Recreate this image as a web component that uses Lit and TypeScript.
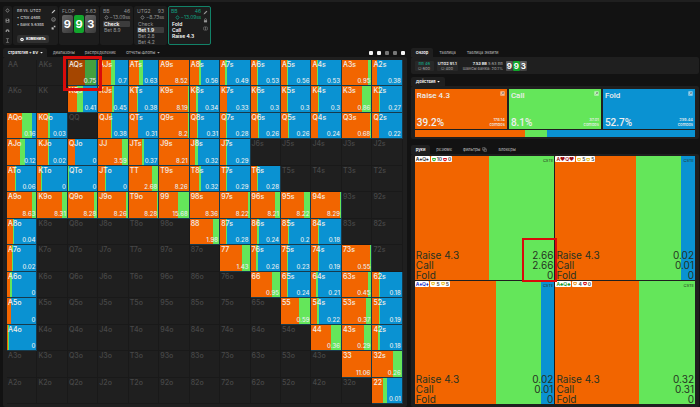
import { LitElement, html, svg, css, nothing } from "lit";
import { customElement, property } from "lit/decorators.js";
import { classMap } from "lit/directives/class-map.js";
import { styleMap } from "lit/directives/style-map.js";

const RANKS = "AKQJT98765432".split("");

/** Hand -> [EV, raise share, call share]; the remainder is fold. */
const HANDS: Record<string, [string, number, number]> = {
  AQs: ["0.75", 57, 40], AJs: ["0.7", 44, 11], ATs: ["0.63", 35, 14], A9s: ["8.52", 100, 0],
  A8s: ["0.56", 31, 7], A7s: ["0.49", 18, 4], A6s: ["0.53", 20, 4], A5s: ["0.56", 22, 3],
  A4s: ["0.53", 20, 4], A3s: ["0.95", 89, 11], A2s: ["0.38", 15, 3],
  KQs: ["0.41", 30, 20], KJs: ["0.45", 45, 7], KTs: ["0.38", 27, 4], K9s: ["8.19", 96, 4],
  K8s: ["0.34", 22, 4], K7s: ["0.33", 22, 3], K6s: ["0.3", 20, 4], K5s: ["0.3", 22, 3],
  K4s: ["0.3", 22, 4], K3s: ["0.86", 70, 30], K2s: ["0.27", 22, 3],
  AQo: ["0.16", 53, 34], KQo: ["0.03", 38, 6], QJs: ["0.38", 43, 3], QTs: ["0.31", 31, 0],
  Q9s: ["8.2", 98, 2], Q8s: ["0.31", 23, 3], Q7s: ["0.28", 21, 4], Q6s: ["0.26", 23, 3],
  Q5s: ["0.26", 24, 2], Q4s: ["0.24", 23, 2], Q3s: ["0.68", 97, 3], Q2s: ["0.22", 22, 2],
  AJo: ["0.12", 46, 15], KJo: ["0.02", 36, 5], QJo: ["0", 25, 0], JJ: ["3.59", 80, 20],
  JTs: ["0.37", 46, 4], J9s: ["8.21", 100, 0], J8s: ["0.32", 18, 9], J7s: ["0.29", 19, 5],
  ATo: ["0.06", 26, 5], KTo: ["0", 14, 4], QTo: ["0", 1, 2], JTo: ["0", 22, 3],
  TT: ["2.68", 79, 21], T9s: ["8.26", 100, 0], T8s: ["0.32", 31, 6], T7s: ["0.29", 21, 4],
  T6s: ["0.28", 20, 5],
  A9o: ["8.63", 85, 15], K9o: ["8.31", 85, 15], Q9o: ["8.28", 91, 9], J9o: ["8.26", 93, 7],
  T9o: ["8.28", 98, 2], "99": ["15.68", 64, 36], "98s": ["8.36", 100, 0], "97s": ["8.22", 94, 6],
  "96s": ["8.21", 84, 16], "95s": ["8.22", 81, 19], "94s": ["8.29", 98, 2],
  A8o: ["0.04", 22, 1], "88": ["1.98", 81, 19], "87s": ["0.28", 21, 3], "86s": ["0.24", 22, 4],
  "85s": ["0.2", 24, 3], "84s": ["0.18", 24, 4],
  A7o: ["0.02", 17, 5], "77": ["1.43", 75, 25], "76s": ["0.26", 17, 7], "75s": ["0.23", 21, 4],
  "74s": ["0.19", 22, 4], "73s": ["0.55", 96, 4],
  A6o: ["0", 9, 7], "66": ["0.95", 74, 26], "65s": ["0.24", 20, 5], "64s": ["0.21", 18, 7],
  "63s": ["0.45", 89, 11], "62s": ["0.18", 22, 4],
  A5o: ["0", 15, 0], "55": ["0.59", 63, 37], "54s": ["0.22", 21, 5], "53s": ["0.37", 83, 17],
  "52s": ["0.19", 22, 4],
  A4o: ["0", 5, 2], "44": ["0.36", 66, 34], "43s": ["0.29", 75, 25], "42s": ["0.18", 21, 5],
  "33": ["11.06", 100, 0], "32s": ["0.26", 70, 30],
  "22": ["0.01", 37, 13],
};

const bands = (raise: number, call: number, dim = false) => {
  const [r, c, f] = dim ? ["#a54600", "#44a03e", "#07659a"] : ["#f26500", "#64e65a", "#0a92d2"];
  return {
    background: `linear-gradient(90deg, ${r} ${raise}%, ${c} ${raise}% ${raise + call}%, ${f} ${raise + call}%)`,
  };
};

const icon = (body: unknown, cls = "") =>
  html`<svg class="ico ${cls}" viewBox="0 0 16 16" aria-hidden="true">${body}</svg>`;

const I = {
  diamond: svg`<path d="M8 2l5 6-5 6-5-6z" fill="none" stroke="currentColor" stroke-width="2.4"/>`,
  save: svg`<path d="M2 2h10l2 2v10H2z" fill="currentColor"/><path d="M5 3h5v3H5zM5 9h6v4H5z" fill="#1e1e1e"/>`,
  cloud: svg`<path d="M2 13V9a6 5 0 0 1 12 0v4h-4V9H6v4z" fill="currentColor"/>`,
  height: svg`<path d="M3 2h10M3 14h10M8 2v12" fill="none" stroke="currentColor" stroke-width="1.8"/>`,
  pencil: svg`<path d="M2 14l1-4 8-8 3 3-8 8z" fill="currentColor"/>`,
  clock: svg`<circle cx="8" cy="8" r="6" fill="none" stroke="currentColor" stroke-width="1.6"/><path d="M5 7h2M9 7h2M5 10h6" stroke="currentColor" stroke-width="1.4"/>`,
  expand: svg`<path d="M8 2h6v6l-2-2-3 3-2-2 3-3zM2 7h4v3h3v4H2z" fill="currentColor"/>`,
  lock: svg`<path d="M3 7h10v7H3z" fill="currentColor"/><path d="M5 7V5a3 3 0 0 1 6 0v2" fill="none" stroke="currentColor" stroke-width="2"/>`,
  panes: svg`<rect x="2" y="3" width="12" height="10" rx="2" fill="none" stroke="currentColor" stroke-width="1.6"/><path d="M8 3v10" stroke="currentColor" stroke-width="1.6"/>`,
  gear: svg`<circle cx="8" cy="8" r="7" fill="#fff"/><circle cx="8" cy="8" r="2.6" fill="#333"/>`,
  caret: svg`<path d="M1 5h14l-7 8z" fill="currentColor"/>`,
  popout: svg`<rect x="1" y="1" width="14" height="14" rx="1" fill="#ffffff90"/><path d="M5 11l6-6M7 5h4v4" stroke="#666" stroke-width="1.8" fill="none"/>`,
  copy: svg`<path d="M2 2h8v8H2zM6 6h8v8H6z" fill="none" stroke="currentColor" stroke-width="1.4"/>`,
  shield: svg`<path d="M1 2h14v6c0 4-3 6-7 8-4-2-7-4-7-8z" fill="currentColor"/><path d="M5 6h6v4H5z" fill="#fff"/>`,
};

@customElement("range-cell")
class RangeCell extends LitElement {
  @property() hand = "";

  static styles = css`
    :host { display: block; min-width: 0; }
    .cell {
      position: relative; box-sizing: border-box; height: 100%; padding: 1px;
      display: flex; flex-direction: column; justify-content: space-between;
      border-right: 1px solid #191919; border-bottom: 1px solid #191919;
      background-color: #1f1f1f;
      font-size: 7px; line-height: 8px; font-weight: 500; color: #484848;
    }
    .on { color: #f4efe8; border-color: #173a4c; }
    .ev { font-size: 6px; line-height: 6px; text-align: right; color: #e8eef0; }
    .mark {
      position: absolute; z-index: 2; inset: -4px -5px -6px -5px;
      border: 3px solid #d90b0b; pointer-events: none;
    }
  `;

  render() {
    const d = HANDS[this.hand];
    const picked = this.hand === "AQs";
    return html`<div
      class=${classMap({ cell: true, on: !!d })}
      style=${styleMap(d ? bands(d[1], d[2], picked) : {})}
    >
      <span>${this.hand}</span>
      ${d ? html`<span class="ev">${d[0]}</span>` : nothing}
      ${picked ? html`<span class="mark"></span>` : nothing}
    </div>`;
  }
}

interface Combo {
  suit: string; glyph: string; notes: [string, string][];
  raise: number; call: number; ev: [string, string, string]; marked?: boolean;
}

const COMBOS: Combo[] = [
  { suit: "spade", glyph: "♠", notes: [["green", "10"], ["red", "0"]], raise: 53, call: 47, ev: ["2.66", "2.66", "0"], marked: true },
  { suit: "heart", glyph: "♥", notes: [["yellow", "5"], ["yellow", "5"]], raise: 58, call: 32, ev: ["0.02", "0.01", "0"] },
  { suit: "diam", glyph: "♦", notes: [["yellow", "5"], ["yellow", "5"]], raise: 58, call: 33, ev: ["0.02", "0.01", "0"] },
  { suit: "club", glyph: "♣", notes: [["orange", "4"], ["red", "0"]], raise: 60, call: 40, ev: ["0.32", "0.31", "0"] },
];

@customElement("app-root")
class AppRoot extends LitElement {
  static styles = css`
    :host {
      display: flex; flex-direction: column; min-height: 100vh; box-sizing: border-box;
      background: #121212; color: #959595;
      font-family: Inter, "Liberation Sans", sans-serif; font-size: 5px; line-height: 6px;
      border-top: 2px solid #1f1f1f;
    }
    button { font: inherit; color: inherit; background: none; border: 0; padding: 0; margin: 0; text-align: left; }
    small { font-size: 4px; }
    .ico { width: 5px; height: 5px; flex: none; display: block; }
    .ico.sm { width: 3px; }
    .row { display: flex; align-items: center; }
    .between { justify-content: space-between; }
    .white { color: #f0f0f0; font-weight: 600; }
    .teal { color: #12a080; }

    .toolbar { display: flex; gap: 1px; padding: 4px 3px 0; height: 39px; }
    .box { background: #1d1d1d; border-radius: 2px; box-sizing: border-box; }
    .icons { display: flex; flex-direction: column; justify-content: space-around; align-items: center; width: 9px; }
    .spot { width: 45px; display: flex; font-size: 4px; font-weight: 500; color: #c4c4c4; }
    .spot .text { flex: 1; padding: 2px 0 1px 4px; display: flex; flex-direction: column; align-items: flex-start; gap: 1px; }
    .spot .icons { justify-content: flex-start; gap: 3px; padding-top: 3px; }
    .edit { background: #303030; border-radius: 2px; color: #fff; font-weight: 700; height: 8px; padding: 0 3px; gap: 2px; margin-top: 6px; }
    .edit .ico { width: 4px; }
    .flop { width: 40px; padding: 2px 3px; }
    .cards { display: flex; gap: 1px; margin-top: 1px; }
    .card {
      flex: 1; height: 18px; border-radius: 2px; color: #fff; background: linear-gradient(135deg, #666, #3a3a3a);
      font-size: 11px; line-height: 18px; font-weight: 700; text-align: center;
    }
    .card.g { background: #12a62c; }
    .seat { width: 33px; padding: 2px 3px 0; }
    .seat .stack { display: flex; justify-content: flex-end; align-items: center; gap: 1px; }
    .seat button { display: block; width: 100%; height: 6px; line-height: 6px; padding-left: 1px; border-radius: 1px; box-sizing: border-box; }
    .seat .picked { background: #3c3c3c; color: #fff; font-weight: 600; }
    .hero { width: 43px; display: flex; border: 1px solid #128268; padding: 1px 0 0 2px; }
    .hero .main { flex: 1; }
    .hero .icons { justify-content: flex-start; gap: 3px; padding-top: 2px; }
    .hero button { color: #fff; font-weight: 600; }

    .columns { flex: 1; display: grid; grid-template-columns: 405fr 289fr; gap: 4px; padding: 3px 1px 0 3px; }
    .left, .right { display: flex; flex-direction: column; min-width: 0; }
    .tabs { display: flex; align-items: center; gap: 1px; height: 9px; font-size: 4px; font-weight: 500; color: #a8a8a8; }
    .tabs button { height: 9px; padding: 0 5px; display: flex; align-items: center; gap: 2px; border-radius: 2px 2px 0 0; }
    .tabs button.sel { background: #1f1f1f; color: #fff; font-weight: 600; }
    .left .tabs > button { padding: 0 4px 0 5px; }
    .tabs .dots { margin-left: auto; display: flex; gap: 4px; padding-right: 2px; }
    .tabs .dots button { width: 4px; height: 4px; padding: 0; border-radius: 1px; background: #f4f4f4; }
    .tabs .dots .dim { background: #777; }
    .panel { background: #1f1f1f; border-radius: 2px; }
    .left .panel { flex: 1; padding: 3px 4px; display: flex; }
    .range { flex: 1; display: grid; grid-template-columns: repeat(13, minmax(0, 1fr)); grid-template-rows: repeat(13, minmax(26px, 1fr)); }

    .summary { display: flex; align-items: center; gap: 3px; height: 17px; padding: 0 4px; font-size: 4px; line-height: 5px; font-weight: 500; }
    .chip { background: #282828; border-radius: 1px; padding: 0 1px; text-align: center; min-width: 17px; }
    .pot { text-align: right; margin-left: 2px; }
    .summary .cards { margin: 0; gap: 0; }
    .summary .card { flex: none; width: 7px; height: 10px; line-height: 10px; font-size: 8px; border-radius: 1px; }
    .summary + .tabs { margin-top: 3px; }
    .actions { padding: 3px 4px 2px; }
    .tiles { display: grid; grid-template-columns: repeat(3, 1fr); gap: 2px; }
    .tile {
      box-sizing: border-box; height: 40px; padding: 2px; color: #eee;
      display: flex; flex-direction: column; justify-content: space-between;
      font-family: Roboto, Inter, sans-serif; font-size: 8px; line-height: 9px; font-weight: 500;
    }
    .tile .pct { font-size: 10px; }
    .tile .combos { font-family: Inter, sans-serif; font-size: 4px; line-height: 5px; text-align: right; }
    .tile .top { display: flex; justify-content: space-between; }
    .tile .bottom { display: flex; justify-content: space-between; align-items: flex-end; }
    .raise { background: #f26500; }
    .call { background: #64e65a; }
    .fold { background: #0a92d2; }
    .share { height: 7px; margin-top: 1px; }
    .lower { margin-top: 6px; }
    .combosPanel { flex: 1; padding: 2px 4px 3px; display: grid; grid-template-columns: 1fr 1fr; grid-template-rows: 1fr 1fr; gap: 1px; }
    .combo { position: relative; display: flex; flex-direction: column; justify-content: space-between; min-height: 120px; color: #263322; }
    .heads { display: flex; gap: 1px; align-items: flex-start; }
    .tag { display: flex; align-items: center; gap: 1px; background: #fff; height: 6px; padding: 0 1px; border-radius: 1px; font-size: 5px; line-height: 6px; color: #444; font-weight: 600; }
    .tag.spade { color: #333; } .tag.heart { color: #9c0d12; } .tag.diam { color: #2030c8; } .tag.club { color: #149a2c; }
    .green { color: #35b53a; } .red { color: #d81622; } .yellow { color: #ecc431; } .orange { color: #efa23b; }
    .tag .ico { width: 4px; }
    .cste { margin-left: auto; padding: 2px 1px; font-size: 4px; line-height: 5px; }
    .evs { margin: 0; padding: 0 1px; font-size: 10px; line-height: 10px; }
    .evs div { display: flex; justify-content: space-between; }
    .evs dd { margin: 0; }
    .mark { position: absolute; z-index: 2; right: -3px; bottom: -2px; width: 35px; height: 44px; box-sizing: border-box; border: 2px solid #d90b0b; pointer-events: none; }
  `;

  private seat(name: string, n: string, stack: string, opts: string[], picked: number) {
    return html`<div class="box seat">
      <div class="row between"><span>${name}</span><span>${n}</span></div>
      <div class="stack">${icon(I.diamond)}<span>${stack}<small>вв</small></span></div>
      <div>
        ${opts.map((o, i) => html`<button class=${classMap({ picked: i === picked })}>${o}</button>`)}
      </div>
    </div>`;
  }

  private tile(kind: string, name: string, pct: string, combos: string) {
    return html`<div class="tile ${kind}">
      <div class="top"><span>${name}</span>${icon(I.popout)}</div>
      <div class="bottom">
        <span class="pct">${pct}</span>
        <span class="combos">${combos}<br />combos</span>
      </div>
    </div>`;
  }

  private combo(c: Combo) {
    return html`<div class="combo" style=${styleMap(bands(c.raise, c.call))}>
      <div class="heads">
        <span class="tag ${c.suit}">A${c.glyph}Q${c.glyph}</span>
        <span class="tag">${c.notes.map(([color, n]) => html`${icon(I.shield, color)}${n}`)}</span>
        <span class="cste">CSTE</span>
      </div>
      <dl class="evs">
        ${["Raise 4.3", "Call", "Fold"].map((t, i) => html`<div><dt>${t}</dt><dd>${c.ev[i]}</dd></div>`)}
      </dl>
      ${c.marked ? html`<span class="mark"></span>` : nothing}
    </div>`;
  }

  private flopCards() {
    return html`<div class="cards">
      <span class="card">9</span><span class="card g">9</span><span class="card">3</span>
    </div>`;
  }

  render() {
    return html`
      <header class="toolbar">
        <div class="box icons">${icon(I.diamond)}${icon(I.save)}${icon(I.cloud)}${icon(I.height)}</div>
        <div class="box spot">
          <div class="text">
            <span>BB vs. UTG2</span>
            <span>• Стек 46вв</span>
            <span>• Банк 5.63вв</span>
            <button class="edit row">${icon(I.gear)}изменить</button>
          </div>
          <div class="icons">${icon(I.pencil)}${icon(I.clock)}${icon(I.expand)}</div>
        </div>
        <div class="box flop">
          <div class="row between"><span>FLOP</span><span>5.63</span></div>
          ${this.flopCards()}
        </div>
        ${this.seat("BB", "46", "−13.09", ["Check", "Bet 8.9"], 0)}
        ${this.seat("UTG2", "93", "−8.73", ["Check", "Bet 1.9", "Bet 2.8", "Bet 4.2"], 1)}
        <div class="box seat hero">
          <div class="main">
            <div class="row between teal"><span>BB</span><span>46</span></div>
            <div class="stack teal">${icon(I.diamond)}<span>−13.09<small>вв</small></span></div>
            <div><button>Fold</button><button>Call</button><button>Raise 4.3</button></div>
          </div>
          <div class="icons">${icon(I.pencil)}${icon(I.lock)}${icon(I.panes)}</div>
        </div>
      </header>
      <main class="columns">
        <section class="left">
          <nav class="tabs">
            <button class="sel">стратегия + EV ${icon(I.caret, "sm")}</button>
            <button>диапазоны</button>
            <button>распределение</button>
            <button>Отчеты:Флопы ${icon(I.caret, "sm")}</button>
            <span class="dots">
              <button aria-label="Вид 1"></button><button aria-label="Вид 2"></button>
              <button class="dim" aria-label="Вид 3"></button><button class="dim" aria-label="Вид 4"></button>
              <button aria-label="Вид 5"></button>
            </span>
          </nav>
          <div class="panel">
            <div class="range">
              ${RANKS.map((r, i) =>
                RANKS.map((c, j) => {
                  const hand = i === j ? r + c : j > i ? r + c + "s" : c + r + "o";
                  return html`<range-cell .hand=${hand}></range-cell>`;
                }),
              )}
            </div>
          </div>
        </section>
        <section class="right">
          <nav class="tabs">
            <button class="sel">Обзор</button><button>Таблица</button><button>Таблица Эквити</button>
          </nav>
          <div class="panel summary">
            <div class="chip"><span class="teal">BB 46</span><br />⛁ 600</div>
            <div class="chip"><span class="white">UTG2 91.1</span><br />⛁ 400</div>
            <div class="pot"><span class="white">7.53 BB</span> 5.63 BB<br />Шансы банка: 20.1%</div>
            ${this.flopCards()}
          </div>
          <nav class="tabs"><button class="sel">Действия ${icon(I.caret, "sm")}</button></nav>
          <div class="panel actions">
            <div class="tiles">
              ${this.tile("raise", "Raise 4.3", "39.2%", "178.14")}
              ${this.tile("call", "Call", "8.1%", "37.01")}
              ${this.tile("fold", "Fold", "52.7%", "239.44")}
            </div>
            <div class="share" style=${styleMap(bands(39.2, 8.1))}></div>
          </div>
          <nav class="tabs lower">
            <button class="sel">руки</button><button>резюме</button>
            <button>фильтры ${icon(I.copy)}</button><button>Блокеры</button>
          </nav>
          <div class="panel combosPanel">${COMBOS.map((c) => this.combo(c))}</div>
        </section>
      </main>
    `;
  }
}
